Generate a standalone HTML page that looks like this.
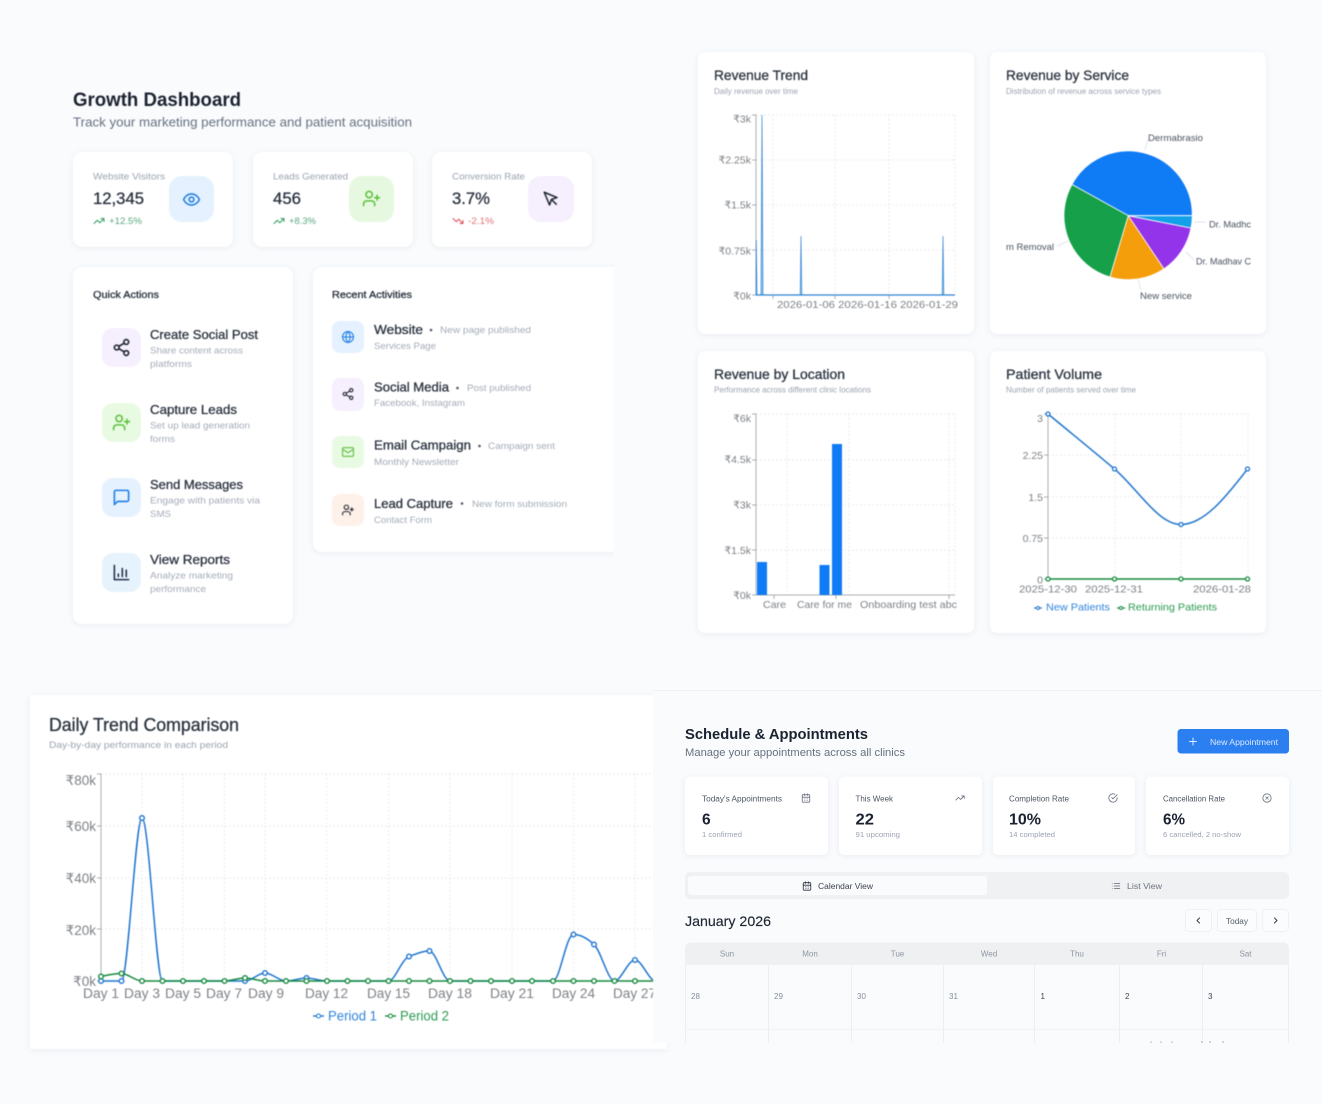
<!DOCTYPE html>
<html lang="en"><head><meta charset="utf-8"><title>Dashboard</title>
<style>
html,body{margin:0;padding:0;background:#f9fbfd;width:1322px;height:1104px;overflow:hidden}
svg{display:block}
text{font-family:"Liberation Sans","DejaVu Sans",sans-serif}
.card{fill:#fff;filter:drop-shadow(0 1px 3px rgba(40,60,90,.08))}
.h{font-weight:700;fill:#1b2230}
.m{fill:#2b3340;stroke:#2b3340;stroke-width:.3}
.d{fill:#a4acb8}
.s{fill:#9aa3b0}
.a{fill:#7d8187;font-size:10.5px}
.big{fill:#7d8187;font-size:13.5px}
.g{stroke:#e3e5e9;stroke-width:1;stroke-dasharray:1.5 2.5;fill:none}
.ax{stroke:#a9adb2;stroke-width:1;fill:none}
.ic{fill:none;stroke-linecap:round;stroke-linejoin:round;stroke-width:2}
.sft{filter:blur(.45px)}
.sft2{filter:blur(.25px)}
</style></head><body>
<svg width="1322" height="1104" viewBox="0 0 1322 1104" xmlns="http://www.w3.org/2000/svg">
<defs>
<symbol id="eye" viewBox="0 0 24 24"><path d="M2 12s3-7 10-7 10 7 10 7-3 7-10 7-10-7-10-7Z"/><circle cx="12" cy="12" r="3"/></symbol>
<symbol id="up" viewBox="0 0 24 24"><path d="M16 21v-2a4 4 0 0 0-4-4H6a4 4 0 0 0-4 4v2"/><circle cx="9" cy="7" r="4"/><path d="M19 8v6M22 11h-6"/></symbol>
<symbol id="ptr" viewBox="0 0 24 24"><path d="M3 3l7.07 16.97 2.51-7.39 7.39-2.51L3 3z"/><path d="M13 13l6 6"/></symbol>
<symbol id="share" viewBox="0 0 24 24"><circle cx="18" cy="5" r="3"/><circle cx="6" cy="12" r="3"/><circle cx="18" cy="19" r="3"/><path d="M8.59 13.51l6.83 3.98M15.41 6.51l-6.82 3.98"/></symbol>
<symbol id="msg" viewBox="0 0 24 24"><path d="M21 15a2 2 0 0 1-2 2H7l-4 4V5a2 2 0 0 1 2-2h14a2 2 0 0 1 2 2z"/></symbol>
<symbol id="bars" viewBox="0 0 24 24"><path d="M3 3v18h18M8 17v-3M13 17V7M18 17V9"/></symbol>
<symbol id="globe" viewBox="0 0 24 24"><circle cx="12" cy="12" r="10"/><path d="M2 12h20M12 2a15.3 15.3 0 0 1 4 10 15.3 15.3 0 0 1-4 10 15.3 15.3 0 0 1-4-10 15.3 15.3 0 0 1 4-10z"/></symbol>
<symbol id="mail" viewBox="0 0 24 24"><rect x="2" y="4" width="20" height="16" rx="2"/><path d="m22 7-8.97 5.7a1.94 1.94 0 0 1-2.06 0L2 7"/></symbol>
<symbol id="tu" viewBox="0 0 24 24"><path d="M22 7l-8.5 8.5-5-5L2 17M16 7h6v6"/></symbol>
<symbol id="td" viewBox="0 0 24 24"><path d="M22 17l-8.5-8.5-5 5L2 7M16 17h6v-6"/></symbol>
<symbol id="cal" viewBox="0 0 24 24"><rect x="3" y="4" width="18" height="18" rx="2"/><path d="M16 2v4M8 2v4M3 10h18M8 14h.01M12 14h.01M16 14h.01M8 18h.01M12 18h.01M16 18h.01"/></symbol>
<symbol id="chk" viewBox="0 0 24 24"><path d="M22 11.08V12a10 10 0 1 1-5.93-9.14"/><path d="M22 4L12 14.01l-3-3"/></symbol>
<symbol id="xc" viewBox="0 0 24 24"><circle cx="12" cy="12" r="10"/><path d="m15 9-6 6M9 9l6 6"/></symbol>
<symbol id="list" viewBox="0 0 24 24"><path d="M8 6h13M8 12h13M8 18h13M3 6h.01M3 12h.01M3 18h.01"/></symbol>
<clipPath id="c1"><rect x="0" y="0" width="614" height="700"/></clipPath>
<clipPath id="c2"><rect x="1006" y="100" width="245" height="220"/></clipPath>
<clipPath id="c3"><rect x="30" y="695" width="623" height="360"/></clipPath>
<clipPath id="c4"><rect x="685" y="942" width="604" height="101"/></clipPath>
</defs>

<rect width="1322" height="1104" fill="#f9fbfd"/>

<!-- GROWTH DASHBOARD -->
<g class="sft">
<text x="73" y="106" class="h" font-size="19.5" textLength="168" lengthAdjust="spacingAndGlyphs">Growth Dashboard</text>
<text x="73" y="126.500" fill="#667180" font-size="12.500" textLength="339" lengthAdjust="spacingAndGlyphs">Track your marketing performance and patient acquisition</text>

<rect class="card" x="73" y="152" width="160" height="95" rx="9"/>
<rect class="card" x="253" y="152" width="160" height="95" rx="9"/>
<rect class="card" x="432" y="152" width="160" height="95" rx="9"/>
<text x="93" y="179.500" class="s" font-size="9.500" textLength="72" lengthAdjust="spacingAndGlyphs">Website Visitors</text>
<text x="273" y="179.500" class="s" font-size="9.500" textLength="75" lengthAdjust="spacingAndGlyphs">Leads Generated</text>
<text x="452" y="179.500" class="s" font-size="9.500" textLength="73" lengthAdjust="spacingAndGlyphs">Conversion Rate</text>
<text x="93" y="204" class="m" font-size="16.500" textLength="51" lengthAdjust="spacingAndGlyphs">12,345</text>
<text x="273" y="204" class="m" font-size="16.500" textLength="28" lengthAdjust="spacingAndGlyphs">456</text>
<text x="452" y="204" class="m" font-size="16.500" textLength="38" lengthAdjust="spacingAndGlyphs">3.7%</text>
<use href="#tu" x="93" y="215" width="12" height="12" stroke="#2e9e62" class="ic"/>
<text x="109" y="224" fill="#5aa97f" font-size="9.500" textLength="33" lengthAdjust="spacingAndGlyphs">+12.5%</text>
<use href="#tu" x="273" y="215" width="12" height="12" stroke="#2e9e62" class="ic"/>
<text x="289" y="224" fill="#5aa97f" font-size="9.500" textLength="27" lengthAdjust="spacingAndGlyphs">+8.3%</text>
<use href="#td" x="452" y="215" width="12" height="12" stroke="#dd4c55" class="ic"/>
<text x="468" y="224" fill="#e0727a" font-size="9.500" textLength="26" lengthAdjust="spacingAndGlyphs">-2.1%</text>
<rect x="169" y="176" width="45" height="46" rx="13" fill="#e5f1fe"/>
<rect x="349" y="176" width="45" height="46" rx="13" fill="#e6f9e0"/>
<rect x="528" y="176" width="46" height="46" rx="13" fill="#f6effd"/>
<use href="#eye" x="182" y="190" width="19" height="19" stroke="#1f7fe6" class="ic"/>
<use href="#up" x="362" y="189" width="19" height="19" stroke="#5cc23d" class="ic"/>
<use href="#ptr" x="542" y="190" width="18" height="18" stroke="#1d2430" class="ic"/>

<!-- Quick actions -->
<rect class="card" x="73" y="267" width="220" height="357" rx="9"/>
<text x="93" y="298" class="m" font-size="10" textLength="66" lengthAdjust="spacingAndGlyphs">Quick Actions</text>
<rect x="102" y="328" width="39" height="39" rx="11" fill="#f6effd"/>
<rect x="102" y="403" width="39" height="39" rx="11" fill="#e8fae2"/>
<rect x="102" y="478" width="39" height="39" rx="11" fill="#e5f1fe"/>
<rect x="102" y="553" width="39" height="39" rx="11" fill="#e6f3fc"/>
<use href="#share" x="112" y="338" width="19" height="19" stroke="#1d2430" class="ic"/>
<use href="#up" x="112" y="413" width="19" height="19" stroke="#5cc23d" class="ic"/>
<use href="#msg" x="112" y="488" width="19" height="19" stroke="#1f7fe6" class="ic"/>
<use href="#bars" x="112" y="563" width="19" height="19" stroke="#26324a" class="ic"/>
<text x="150" y="339" class="m" font-size="13" textLength="108" lengthAdjust="spacingAndGlyphs">Create Social Post</text>
<text x="150" y="353.500" class="d" font-size="9.500" textLength="93" lengthAdjust="spacingAndGlyphs">Share content across</text>
<text x="150" y="367" class="d" font-size="9.500" textLength="42" lengthAdjust="spacingAndGlyphs">platforms</text>
<text x="150" y="414" class="m" font-size="13" textLength="87" lengthAdjust="spacingAndGlyphs">Capture Leads</text>
<text x="150" y="428.500" class="d" font-size="9.500" textLength="100" lengthAdjust="spacingAndGlyphs">Set up lead generation</text>
<text x="150" y="442" class="d" font-size="9.500" textLength="25" lengthAdjust="spacingAndGlyphs">forms</text>
<text x="150" y="489" class="m" font-size="13" textLength="93" lengthAdjust="spacingAndGlyphs">Send Messages</text>
<text x="150" y="503.500" class="d" font-size="9.500" textLength="110" lengthAdjust="spacingAndGlyphs">Engage with patients via</text>
<text x="150" y="517" class="d" font-size="9.500" textLength="21" lengthAdjust="spacingAndGlyphs">SMS</text>
<text x="150" y="564" class="m" font-size="13" textLength="80" lengthAdjust="spacingAndGlyphs">View Reports</text>
<text x="150" y="578.500" class="d" font-size="9.500" textLength="83" lengthAdjust="spacingAndGlyphs">Analyze marketing</text>
<text x="150" y="592" class="d" font-size="9.500" textLength="56" lengthAdjust="spacingAndGlyphs">performance</text>

<!-- Recent -->
<g clip-path="url(#c1)">
<rect class="card" x="313" y="267" width="320" height="285" rx="9"/>
</g>
<text x="332" y="298" class="m" font-size="10" textLength="80" lengthAdjust="spacingAndGlyphs">Recent Activities</text>
<rect x="332" y="321" width="32" height="32" rx="8" fill="#e5f1fe"/>
<rect x="332" y="378" width="32" height="33" rx="8" fill="#f6effd"/>
<rect x="332" y="436" width="32" height="32" rx="8" fill="#e8fae2"/>
<rect x="332" y="494" width="32" height="32" rx="8" fill="#fdf1e9"/>
<use href="#globe" x="341.500" y="330.500" width="13" height="13" stroke="#1f7fe6" class="ic"/>
<use href="#share" x="341.500" y="387.500" width="13" height="13" stroke="#1d2430" class="ic"/>
<use href="#mail" x="341.500" y="445.500" width="13" height="13" stroke="#5cc23d" class="ic"/>
<use href="#up" x="341.500" y="503.500" width="13" height="13" stroke="#1d2430" class="ic"/>
<text x="374" y="334" class="m" font-size="12.500" textLength="49" lengthAdjust="spacingAndGlyphs">Website</text>
<circle cx="431" cy="330" r="1.300" fill="#556"/>
<text x="440" y="333" class="d" font-size="9.500" textLength="91" lengthAdjust="spacingAndGlyphs">New page published</text>
<text x="374" y="349" class="d" font-size="9.500" textLength="62" lengthAdjust="spacingAndGlyphs">Services Page</text>
<text x="374" y="391.500" class="m" font-size="12.500" textLength="75" lengthAdjust="spacingAndGlyphs">Social Media</text>
<circle cx="457.500" cy="388" r="1.300" fill="#556"/>
<text x="467" y="391" class="d" font-size="9.500" textLength="64" lengthAdjust="spacingAndGlyphs">Post published</text>
<text x="374" y="406" class="d" font-size="9.500" textLength="91" lengthAdjust="spacingAndGlyphs">Facebook, Instagram</text>
<text x="374" y="449.500" class="m" font-size="12.500" textLength="97" lengthAdjust="spacingAndGlyphs">Email Campaign</text>
<circle cx="479.500" cy="446" r="1.300" fill="#556"/>
<text x="488" y="449" class="d" font-size="9.500" textLength="67" lengthAdjust="spacingAndGlyphs">Campaign sent</text>
<text x="374" y="465" class="d" font-size="9.500" textLength="85" lengthAdjust="spacingAndGlyphs">Monthly Newsletter</text>
<text x="374" y="508" class="m" font-size="12.500" textLength="79" lengthAdjust="spacingAndGlyphs">Lead Capture</text>
<circle cx="462" cy="503.500" r="1.300" fill="#556"/>
<text x="472" y="507" class="d" font-size="9.500" textLength="95" lengthAdjust="spacingAndGlyphs">New form submission</text>
<text x="374" y="523" class="d" font-size="9.500" textLength="58" lengthAdjust="spacingAndGlyphs">Contact Form</text>

<!-- Revenue Trend -->
<rect class="card" x="698" y="52" width="276" height="282" rx="7"/>
<text x="714" y="80" class="m" font-size="14" textLength="94" lengthAdjust="spacingAndGlyphs">Revenue Trend</text>
<text x="714" y="94" class="s" font-size="8" textLength="84" lengthAdjust="spacingAndGlyphs">Daily revenue over time</text>
<path class="g" d="M756 115H955M756 160H955M756 205H955M756 250H955M773 115V295M835 115V295M889 115V295M955 115V295"/>
<path d="M752 115H756V295H955M752 160H756M752 205H756M752 250H756M752 295H756M773 295v4M835 295v4M889 295v4" class="ax"/>
<path d="M756 295L756.300 240L757 295ZM761 295L762 115L763 295ZM800.200 295L801 236L801.800 295ZM942.200 295L943 236L943.800 295Z" fill="#8fc2ef" stroke="#2f84d4" stroke-width=".7"/>
<path d="M756 295H955" stroke="#2f84d4" stroke-width="1.200"/>
<text x="751" y="122.500" text-anchor="end" class="a">₹3k</text>
<text x="751" y="163.500" text-anchor="end" class="a">₹2.25k</text>
<text x="751" y="208.500" text-anchor="end" class="a">₹1.5k</text>
<text x="751" y="254.500" text-anchor="end" class="a">₹0.75k</text>
<text x="751" y="299.500" text-anchor="end" class="a">₹0k</text>
<text x="777" y="308" class="a" textLength="58" lengthAdjust="spacingAndGlyphs">2026-01-06</text>
<text x="838" y="308" class="a" textLength="59" lengthAdjust="spacingAndGlyphs">2026-01-16</text>
<text x="900" y="308" class="a" textLength="58" lengthAdjust="spacingAndGlyphs">2026-01-29</text>

<!-- Revenue by Service -->
<rect class="card" x="990" y="52" width="276" height="282" rx="7"/>
<text x="1006" y="80" class="m" font-size="14" textLength="123" lengthAdjust="spacingAndGlyphs">Revenue by Service</text>
<text x="1006" y="94" class="s" font-size="8" textLength="155" lengthAdjust="spacingAndGlyphs">Distribution of revenue across service types</text>
<g stroke="#fff" stroke-width=".8">
<path d="M1128.300 215.700H1192.300A64 64 0 0 0 1072 184.500Z" fill="#0f7bf5"/>
<path d="M1128.300 215.700L1072 184.500A64 64 0 0 0 1110 277Z" fill="#16a04a"/>
<path d="M1128.300 215.700L1110 277A64 64 0 0 0 1164 268.800Z" fill="#f59e0b"/>
<path d="M1128.300 215.700L1164 268.800A64 64 0 0 0 1191 228Z" fill="#9333ea"/>
<path d="M1128.300 215.700L1191 228A64 64 0 0 0 1192.300 215.700Z" fill="#12a0e8"/>
</g>
<path d="M1145 150L1148 139M1194 222H1206M1186 252L1194 260M1138 279L1141 290M1068 241L1057 246" stroke="#e2e4e8" fill="none"/>
<g clip-path="url(#c2)" fill="#4a5260" font-size="9.500">
<text x="1148" y="141" textLength="55" lengthAdjust="spacingAndGlyphs">Dermabrasio</text>
<text x="1209" y="227.500" textLength="42" lengthAdjust="spacingAndGlyphs">Dr. Madhc</text>
<text x="1196" y="264.500" textLength="55" lengthAdjust="spacingAndGlyphs">Dr. Madhav C</text>
<text x="1006" y="250" textLength="48" lengthAdjust="spacingAndGlyphs">m Removal</text>
<text x="1140" y="299" textLength="52" lengthAdjust="spacingAndGlyphs">New service</text>
</g>

<!-- Revenue by Location -->
<rect class="card" x="698" y="351" width="276" height="282" rx="7"/>
<text x="714" y="379" class="m" font-size="14" textLength="131" lengthAdjust="spacingAndGlyphs">Revenue by Location</text>
<text x="714" y="392.500" class="s" font-size="8" textLength="157" lengthAdjust="spacingAndGlyphs">Performance across different clinic locations</text>
<path class="g" d="M756 414H955M756 460H955M756 505H955M756 550H955M787 414V595M849 414V595M949 414V595M955 414V595"/>
<path d="M752 414H756V595H955M752 460H756M752 505H756M752 550H756M752 595H756M774 595v4M836 595v4M949 595v4" class="ax"/>
<rect x="757" y="562" width="10" height="33" fill="#0f7bf5"/>
<rect x="819.500" y="565" width="10" height="30" fill="#0f7bf5"/>
<rect x="832" y="444" width="10" height="151" fill="#0f7bf5"/>
<text x="751" y="422" text-anchor="end" class="a">₹6k</text>
<text x="751" y="463" text-anchor="end" class="a">₹4.5k</text>
<text x="751" y="508.500" text-anchor="end" class="a">₹3k</text>
<text x="751" y="554" text-anchor="end" class="a">₹1.5k</text>
<text x="751" y="599" text-anchor="end" class="a">₹0k</text>
<text x="763" y="608" class="a" textLength="23" lengthAdjust="spacingAndGlyphs">Care</text>
<text x="797" y="608" class="a" textLength="55" lengthAdjust="spacingAndGlyphs">Care for me</text>
<text x="860" y="608" class="a" textLength="97" lengthAdjust="spacingAndGlyphs">Onboarding test abc</text>

<!-- Patient Volume -->
<rect class="card" x="990" y="351" width="276" height="282" rx="7"/>
<text x="1006" y="379" class="m" font-size="14" textLength="96" lengthAdjust="spacingAndGlyphs">Patient Volume</text>
<text x="1006" y="392.500" class="s" font-size="8" textLength="130" lengthAdjust="spacingAndGlyphs">Number of patients served over time</text>
<path class="g" d="M1048 414H1248M1048 455H1248M1048 497H1248M1048 538H1248M1115 414V579M1181 414V579M1248 414V579"/>
<path d="M1044 414H1048V579H1248M1044 455H1048M1044 497H1048M1044 538H1048M1044 579H1048" class="ax"/>
<path d="M1048 414C1070 432 1092 450 1114.500 469C1137 488 1158 524.500 1181 524.500C1204 524.500 1226 497 1247.500 469" fill="none" stroke="#1f74d0" stroke-width="1.500"/>
<path d="M1048 579H1248" stroke="#178a3e" stroke-width="1.500"/>
<g fill="#fff" stroke="#1f74d0" stroke-width="1.300"><circle cx="1048" cy="414" r="2"/><circle cx="1114.500" cy="469" r="2"/><circle cx="1181" cy="524.500" r="2"/><circle cx="1247.500" cy="469" r="2"/></g>
<g fill="#fff" stroke="#178a3e" stroke-width="1.300"><circle cx="1048" cy="579" r="2"/><circle cx="1114.500" cy="579" r="2"/><circle cx="1181" cy="579" r="2"/><circle cx="1247.500" cy="579" r="2"/></g>
<text x="1043" y="422" text-anchor="end" class="a">3</text>
<text x="1043" y="459" text-anchor="end" class="a">2.25</text>
<text x="1043" y="501" text-anchor="end" class="a">1.5</text>
<text x="1043" y="542" text-anchor="end" class="a">0.75</text>
<text x="1043" y="583.500" text-anchor="end" class="a">0</text>
<text x="1019" y="592.500" class="a" textLength="58" lengthAdjust="spacingAndGlyphs">2025-12-30</text>
<text x="1085" y="592.500" class="a" textLength="58" lengthAdjust="spacingAndGlyphs">2025-12-31</text>
<text x="1193" y="592.500" class="a" textLength="58" lengthAdjust="spacingAndGlyphs">2026-01-28</text>
<path d="M1034 608H1042" stroke="#1f74d0" stroke-width="1.200"/><circle cx="1038" cy="608" r="1.500" fill="#fff" stroke="#1f74d0"/>
<text x="1046" y="610.500" fill="#2f84dc" font-size="10.500" textLength="64" lengthAdjust="spacingAndGlyphs">New Patients</text>
<path d="M1117 608H1125" stroke="#178a3e" stroke-width="1.200"/><circle cx="1121" cy="608" r="1.500" fill="#fff" stroke="#178a3e"/>
<text x="1128" y="610.500" fill="#2a9a50" font-size="10.500" textLength="89" lengthAdjust="spacingAndGlyphs">Returning Patients</text>

<!-- Daily Trend -->
<rect class="card" x="30" y="695" width="637" height="354"/>
</g>

<!-- Schedule panel background -->
<rect x="653" y="691" width="669" height="352" fill="#f9fbfd"/>
<path d="M653 690.500H1322" stroke="#eef0f3"/>

<g class="sft">
<text x="49" y="731" class="m" font-size="18" textLength="190" lengthAdjust="spacingAndGlyphs">Daily Trend Comparison</text>
<text x="49" y="748" class="s" font-size="9.500" textLength="179" lengthAdjust="spacingAndGlyphs">Day-by-day performance in each period</text>
<g clip-path="url(#c3)">
<path class="g" d="M101 774H653M101 826H653M101 878H653M101 929H653M142 774V981M183 774V981M224.500 774V981M265 774V981M326.500 774V981M388.500 774V981M450 774V981M512 774V981M573.500 774V981M635 774V981"/>
<path class="ax" d="M97 774H101V981M97 826H101M97 878H101M97 929H101M97 981H101"/>
<path fill="none" stroke="#1f74d0" stroke-width="1.500" d="M101 981H121.500C128 981 135.500 818 142 818C149 818 156 981 162.500 981H245C252 981 258 973 265 973C272 973 279 981 286 981C293 981 300 978 306.500 978C313 978 320 981 327 981H388.500C395 981 401 960 409 956.500C416 954 422 951 429.500 951C436 951 443 981 450 981H553C560 981 566 934.500 573.500 934.500C580 934.500 587 938 594 944.500C601 951 608 981 614.500 981C621 981 628 960 635 960C642 960 649 981 655.500 981"/>
<g fill="#fff" stroke="#1f74d0" stroke-width="1.400">
<circle cx="101" cy="981" r="2.300"/><circle cx="121.500" cy="981" r="2.300"/><circle cx="142" cy="818" r="2.300"/><circle cx="245" cy="981" r="2.300"/><circle cx="265" cy="973" r="2.300"/><circle cx="306.500" cy="978" r="2.300"/><circle cx="409" cy="956.500" r="2.300"/><circle cx="429.500" cy="951" r="2.300"/><circle cx="573.500" cy="934.500" r="2.300"/><circle cx="594" cy="944.500" r="2.300"/><circle cx="635" cy="960" r="2.300"/>
</g>
<path fill="none" stroke="#178a3e" stroke-width="1.500" d="M101 976.500C108 975 114 973.500 121.500 973.500C128 973.500 135 981 142 981H224.500C231 981 238 978 245 978C252 978 258 981 265 981H655"/>
<g fill="#fff" stroke="#178a3e" stroke-width="1.400">
<circle cx="101" cy="976.500" r="2.300"/><circle cx="121.500" cy="973.500" r="2.300"/><circle cx="142" cy="981" r="2.300"/><circle cx="162.500" cy="981" r="2.300"/><circle cx="183" cy="981" r="2.300"/><circle cx="204" cy="981" r="2.300"/><circle cx="224.500" cy="981" r="2.300"/><circle cx="245" cy="978" r="2.300"/><circle cx="265" cy="981" r="2.300"/><circle cx="286" cy="981" r="2.300"/><circle cx="306.500" cy="981" r="2.300"/><circle cx="327" cy="981" r="2.300"/><circle cx="347.500" cy="981" r="2.300"/><circle cx="368" cy="981" r="2.300"/><circle cx="388.500" cy="981" r="2.300"/><circle cx="409" cy="981" r="2.300"/><circle cx="429.500" cy="981" r="2.300"/><circle cx="450" cy="981" r="2.300"/><circle cx="470.500" cy="981" r="2.300"/><circle cx="491" cy="981" r="2.300"/><circle cx="512" cy="981" r="2.300"/><circle cx="532" cy="981" r="2.300"/><circle cx="553" cy="981" r="2.300"/><circle cx="573.500" cy="981" r="2.300"/><circle cx="594" cy="981" r="2.300"/><circle cx="614.500" cy="981" r="2.300"/><circle cx="635" cy="981" r="2.300"/>
</g>
<text x="96" y="785" text-anchor="end" class="big">₹80k</text>
<text x="96" y="831" text-anchor="end" class="big">₹60k</text>
<text x="96" y="883" text-anchor="end" class="big">₹40k</text>
<text x="96" y="935" text-anchor="end" class="big">₹20k</text>
<text x="96" y="986" text-anchor="end" class="big">₹0k</text>
<text x="83" y="998" class="big" textLength="36" lengthAdjust="spacingAndGlyphs">Day 1</text>
<text x="124" y="998" class="big" textLength="36" lengthAdjust="spacingAndGlyphs">Day 3</text>
<text x="165" y="998" class="big" textLength="36" lengthAdjust="spacingAndGlyphs">Day 5</text>
<text x="206" y="998" class="big" textLength="36" lengthAdjust="spacingAndGlyphs">Day 7</text>
<text x="248" y="998" class="big" textLength="36" lengthAdjust="spacingAndGlyphs">Day 9</text>
<text x="305" y="998" class="big" textLength="43" lengthAdjust="spacingAndGlyphs">Day 12</text>
<text x="367" y="998" class="big" textLength="43" lengthAdjust="spacingAndGlyphs">Day 15</text>
<text x="428" y="998" class="big" textLength="44" lengthAdjust="spacingAndGlyphs">Day 18</text>
<text x="490" y="998" class="big" textLength="44" lengthAdjust="spacingAndGlyphs">Day 21</text>
<text x="552" y="998" class="big" textLength="43" lengthAdjust="spacingAndGlyphs">Day 24</text>
<text x="613" y="998" class="big" textLength="43" lengthAdjust="spacingAndGlyphs">Day 27</text>
</g>
<path d="M313 1016H324" stroke="#1f74d0" stroke-width="1.400"/><circle cx="318.500" cy="1016" r="2" fill="#fff" stroke="#1f74d0"/>
<text x="328" y="1020.500" fill="#2f84dc" font-size="13.500" textLength="49" lengthAdjust="spacingAndGlyphs">Period 1</text>
<path d="M385 1016H396" stroke="#178a3e" stroke-width="1.400"/><circle cx="390.500" cy="1016" r="2" fill="#fff" stroke="#178a3e"/>
<text x="400" y="1020.500" fill="#2a9a50" font-size="13.500" textLength="49" lengthAdjust="spacingAndGlyphs">Period 2</text>
</g>

<!-- SCHEDULE -->
<g class="sft2">
<text x="685" y="739" class="h" font-size="15" textLength="183" lengthAdjust="spacingAndGlyphs">Schedule &amp; Appointments</text>
<text x="685" y="756" fill="#667180" font-size="11" textLength="220" lengthAdjust="spacingAndGlyphs">Manage your appointments across all clinics</text>
<rect x="1177.500" y="729" width="111.500" height="24.500" rx="3.500" fill="#2b7ff0"/>
<path d="M1189.500 741.500h7M1193 738v7" stroke="#e3eefc" stroke-width="1" stroke-linecap="round"/>
<text x="1210" y="745" fill="#dce9fb" font-size="8" textLength="68" lengthAdjust="spacingAndGlyphs">New Appointment</text>

<rect class="card" x="685" y="776.500" width="143" height="78.500" rx="5"/>
<rect class="card" x="839" y="776.500" width="143" height="78.500" rx="5"/>
<rect class="card" x="993" y="776.500" width="142" height="78.500" rx="5"/>
<rect class="card" x="1146" y="776.500" width="143" height="78.500" rx="5"/>
<text x="702" y="801.500" fill="#4e5663" font-size="8" textLength="80" lengthAdjust="spacingAndGlyphs">Today's Appointments</text>
<text x="855.500" y="801.500" fill="#4e5663" font-size="8" textLength="37.500" lengthAdjust="spacingAndGlyphs">This Week</text>
<text x="1009" y="801.500" fill="#4e5663" font-size="8" textLength="60" lengthAdjust="spacingAndGlyphs">Completion Rate</text>
<text x="1163" y="801.500" fill="#4e5663" font-size="8" textLength="62" lengthAdjust="spacingAndGlyphs">Cancellation Rate</text>
<use href="#cal" x="801" y="793" width="10" height="10" stroke="#6a7280" class="ic"/>
<use href="#tu" x="955" y="793" width="10" height="10" stroke="#6a7280" class="ic"/>
<use href="#chk" x="1108" y="793" width="10" height="10" stroke="#6a7280" class="ic"/>
<use href="#xc" x="1262" y="793" width="10" height="10" stroke="#6a7280" class="ic"/>
<text x="702" y="824.500" class="h" font-size="15.500">6</text>
<text x="855.500" y="824.500" class="h" font-size="15.500" textLength="18.500" lengthAdjust="spacingAndGlyphs">22</text>
<text x="1009" y="824.500" class="h" font-size="15.500" textLength="32" lengthAdjust="spacingAndGlyphs">10%</text>
<text x="1163" y="824.500" class="h" font-size="15.500" textLength="22" lengthAdjust="spacingAndGlyphs">6%</text>
<text x="702" y="837" class="s" font-size="7.500" textLength="40" lengthAdjust="spacingAndGlyphs">1 confirmed</text>
<text x="855.500" y="837" class="s" font-size="7.500" textLength="44.500" lengthAdjust="spacingAndGlyphs">91 upcoming</text>
<text x="1009" y="837" class="s" font-size="7.500" textLength="46" lengthAdjust="spacingAndGlyphs">14 completed</text>
<text x="1163" y="837" class="s" font-size="7.500" textLength="78" lengthAdjust="spacingAndGlyphs">6 cancelled, 2 no-show</text>

<rect x="685" y="872" width="604" height="27" rx="5" fill="#eff1f3"/>
<rect x="688" y="876" width="299" height="19" rx="3" fill="#fafbfc"/>
<use href="#cal" x="802" y="881" width="10" height="10" stroke="#2b3340" class="ic"/>
<text x="818" y="889" fill="#3c4451" font-size="8" textLength="55" lengthAdjust="spacingAndGlyphs">Calendar View</text>
<use href="#list" x="1111" y="881" width="10" height="10" stroke="#5d6572" class="ic"/>
<text x="1127" y="889" fill="#6c7480" font-size="8" textLength="35" lengthAdjust="spacingAndGlyphs">List View</text>

<text x="685" y="926" fill="#1f2633" stroke="#1f2633" stroke-width=".15" font-size="14" textLength="86" lengthAdjust="spacingAndGlyphs">January 2026</text>
<rect x="1185.500" y="909.500" width="26" height="22" rx="4" fill="#fafcfd" stroke="#eef0f3"/>
<rect x="1217.500" y="909.500" width="39" height="22" rx="4" fill="#fafcfd" stroke="#eef0f3"/>
<rect x="1262.500" y="909.500" width="26" height="22" rx="4" fill="#fafcfd" stroke="#eef0f3"/>
<path d="M1199.500 918l-2.500 2.500 2.500 2.500M1274.500 918l2.500 2.500-2.500 2.500" fill="none" stroke="#3c4451" stroke-width="1.100" stroke-linecap="round" stroke-linejoin="round"/>
<text x="1226" y="924" fill="#565e6b" font-size="8" textLength="22" lengthAdjust="spacingAndGlyphs">Today</text>

<g clip-path="url(#c4)">
<path d="M691 942.500h592a6 6 0 0 1 6 6v16.500H685V948.500a6 6 0 0 1 6-6Z" fill="#eef0f2"/>
<path d="M685.500 965V1043M768.500 965V1043M851.500 965V1043M943.500 965V1043M1034.500 965V1043M1119.500 965V1043M1202.500 965V1043M1288.500 965V1043" stroke="#eceef1"/>
<path d="M685 1029.500H1289" stroke="#f0f2f4"/>
<g fill="#d0d3d8"><rect x="1150" y="1041.500" width="2" height="2"/><rect x="1160" y="1041.500" width="2" height="2"/><rect x="1171" y="1041.500" width="2" height="2"/><rect x="1201" y="1041" width="2" height="2"/><rect x="1209" y="1041" width="2" height="2"/><rect x="1222" y="1041" width="2" height="2"/></g>
</g>
<g fill="#8e96a2" font-size="8" text-anchor="middle">
<text x="727" y="956.500">Sun</text><text x="810" y="956.500">Mon</text><text x="897.500" y="956.500">Tue</text><text x="989" y="956.500">Wed</text><text x="1077" y="956.500">Thu</text><text x="1161.500" y="956.500">Fri</text><text x="1245.500" y="956.500">Sat</text>
</g>
<g fill="#868e9a" font-size="8">
<text x="691" y="999">28</text><text x="774" y="999">29</text><text x="857" y="999">30</text><text x="949" y="999">31</text>
</g>
<g fill="#3c4451" font-size="8">
<text x="1040.500" y="999">1</text><text x="1125" y="999">2</text><text x="1208" y="999">3</text>
</g>
</g>
</svg>
</body></html>
